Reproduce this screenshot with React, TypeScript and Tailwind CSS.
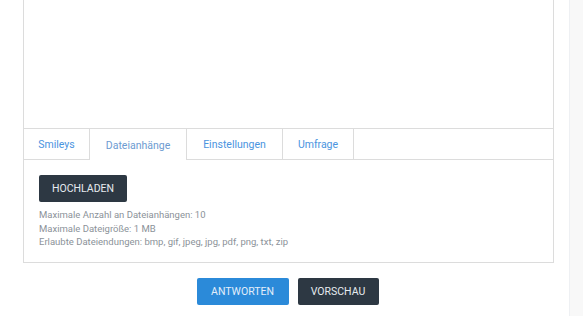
const tabs = [
  { label: "Smileys", w: "w-[66px]" },
  { label: "Dateianhänge", w: "w-[97px]" },
  { label: "Einstellungen", w: "w-[96px]" },
  { label: "Umfrage", w: "w-[71px]" },
];

export default function App() {
  return (
    <div className="flex h-[316px] w-[583px] overflow-hidden bg-white font-['Roboto',sans-serif]">
      <div className="flex w-[569px] flex-col">
        <div className="ml-[23px] mr-[15px] flex flex-col border-x border-b border-[#dcdcdc]">
          {/* editor area */}
          <div className="h-[129px] border-b border-[#dcdcdc]" />

          {/* tabs */}
          <div className="flex h-[31px] border-b border-[#dcdcdc]">
            {tabs.map((t, i) => (
              <div
                key={t.label}
                className={
                  i === 1
                    ? `-mb-px flex ${t.w} items-center justify-center border-r border-[#dcdcdc] bg-white pt-[2px] text-[10.5px] text-[#6d9bd1]`
                    : `flex ${t.w} items-center justify-center border-r border-[#dcdcdc] pt-[2px] text-[10.5px] text-[#4a94e0]`
                }
              >
                {t.label}
              </div>
            ))}
          </div>

          {/* upload panel */}
          <div className="flex h-[102px] flex-col px-[15px] pt-[15px]">
            <button className="h-[27px] w-[88px] rounded-[2px] bg-[#2d3843] text-[10.5px] text-[#e6ebef]">
              HOCHLADEN
            </button>
            <div className="mt-[6px] text-[9.5px] leading-[13.5px] text-[#8b9299]">
              <p>Maximale Anzahl an Dateianhängen: 10</p>
              <p>Maximale Dateigröße: 1 MB</p>
              <p>Erlaubte Dateiendungen: bmp, gif, jpeg, jpg, pdf, png, txt, zip</p>
            </div>
          </div>
        </div>

        <div className="mt-[15px] flex justify-center gap-[9px] pl-[6px]">
          <button className="h-[27px] w-[92px] rounded-[2px] bg-[#2b8ad9] text-[10.5px] text-[#e3eef9]">
            ANTWORTEN
          </button>
          <button className="h-[27px] w-[81px] rounded-[2px] bg-[#2d3843] text-[10.5px] text-[#e6ebef]">
            VORSCHAU
          </button>
        </div>
      </div>

      {/* sidebar strip */}
      <div className="w-[14px] border-l border-[#eef0f3] bg-[#f8f8f8]" />
    </div>
  );
}
